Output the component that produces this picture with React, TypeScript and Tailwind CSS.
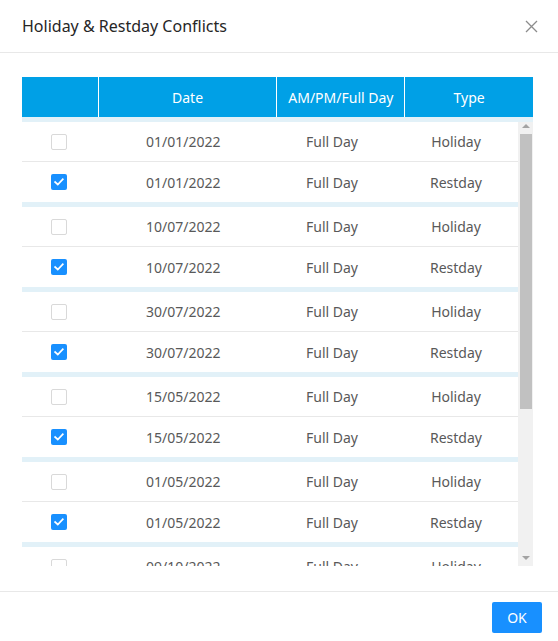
import { Fragment } from 'react';

type Conflict = { date: string; period: string; type: string; checked: boolean };

const dates = ['01/01/2022', '10/07/2022', '30/07/2022', '15/05/2022', '01/05/2022', '09/10/2022'];

const groups: Conflict[][] = dates.map((date) => [
    { date, period: 'Full Day', type: 'Holiday', checked: false },
    { date, period: 'Full Day', type: 'Restday', checked: true },
]);

function Checkbox({ checked }: { checked: boolean }) {
    if (checked) {
        return (
            <span className="w-4 h-4 rounded-[2px] bg-[#1890ff] flex items-center justify-center">
                <svg width="10" height="8" viewBox="0 0 10 8" fill="none">
                    <path d="M1.2 4.1 3.8 6.5 8.8 1.3" stroke="#fff" strokeWidth="1.8" strokeLinecap="square" />
                </svg>
            </span>
        );
    }
    return <span className="w-4 h-4 rounded-[2px] border border-[#d9d9d9] bg-white block" />;
}

function Row({ item, border }: { item: Conflict; border: boolean }) {
    return (
        <div className={`flex h-10 items-center text-[14px] text-[#595959] ${border ? 'border-b border-[#e8e8e8]' : ''}`}>
            <div className="w-[15%] flex justify-center">
                <Checkbox checked={item.checked} />
            </div>
            <div className="w-[35%] text-center">{item.date}</div>
            <div className="w-[25%] text-center">{item.period}</div>
            <div className="w-[25%] text-center">{item.type}</div>
        </div>
    );
}

function Scrollbar() {
    return (
        <div className="w-[15px] shrink-0 bg-[#f1f1f1] flex flex-col">
            <div className="h-[12px] flex justify-center pt-[2px]">
                <span className="w-0 h-0 border-x-[4px] border-x-transparent border-b-[4px] border-b-[#a3a3a3]" />
            </div>
            <div className="h-[275px] ml-[2px] w-[12px] bg-[#c1c1c1]" />
            <div className="flex-1" />
            <div className="h-[12px] flex justify-center pt-[2px]">
                <span className="w-0 h-0 border-x-[4px] border-x-transparent border-t-[4px] border-t-[#a3a3a3]" />
            </div>
        </div>
    );
}

export default function App() {
    return (
        <div className="w-[558px] h-[641px] bg-white flex flex-col font-['Noto_Sans','Open_Sans',sans-serif]">
            <header className="h-[53px] shrink-0 border-b border-[#e8e8e8] flex items-center justify-between pl-[22px] pr-[20px]">
                <h1 className="text-[16px] font-normal text-[#262626]">Holiday &amp; Restday Conflicts</h1>
                <svg width="13" height="13" viewBox="0 0 13 13" fill="none">
                    <path d="M1 1 12 12M12 1 1 12" stroke="#8c8c8c" strokeWidth="1.3" />
                </svg>
            </header>

            <div className="pt-6 pl-[22px] w-[533px]">
                <div className="flex h-10 bg-[#00a0e6] text-white text-[14px]">
                    <div className="w-[15%] border-r border-white" />
                    <div className="w-[35%] border-r border-white flex items-center justify-center">Date</div>
                    <div className="w-[25%] border-r border-white flex items-center justify-center">AM/PM/Full Day</div>
                    <div className="w-[25%] flex items-center justify-center">Type</div>
                </div>
                <div className="h-[5px] bg-[#e2f1f8]" />
                <div className="h-[444px] flex overflow-hidden">
                    <div className="flex-1 overflow-hidden">
                        {groups.map((group, i) => (
                            <Fragment key={i}>
                                {i > 0 && <div className="h-[5px] bg-[#e2f1f8]" />}
                                <Row item={group[0]} border />
                                <Row item={group[1]} border={false} />
                            </Fragment>
                        ))}
                    </div>
                    <Scrollbar />
                </div>
            </div>

            <div className="flex-1" />
            <footer className="h-[50px] shrink-0 border-t border-[#e8e8e8] flex justify-end pt-[10px] pr-[16px]">
                <button type="button" className="h-[31px] w-[50px] rounded-[2px] bg-[#1890ff] text-white text-[14px]">
                    OK
                </button>
            </footer>
        </div>
    );
}
